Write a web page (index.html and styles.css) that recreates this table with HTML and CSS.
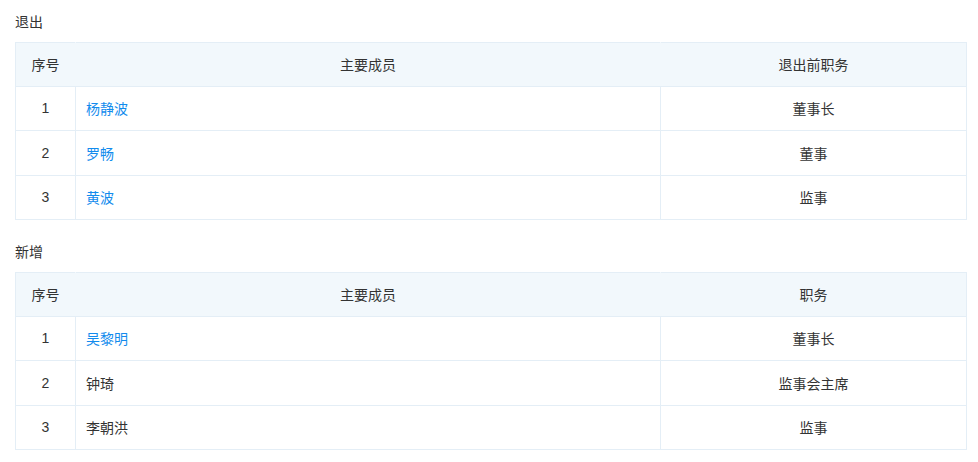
FILE: index.html
```html
<!DOCTYPE html>
<html lang="zh">
<head>
<meta charset="utf-8">
<link rel="stylesheet" href="styles.css">
</head>
<body>
<div class="page">
  <div class="section-title">退出</div>
  <table class="grid">
    <colgroup><col class="c1"><col class="c2"><col class="c3"></colgroup>
    <thead>
      <tr><th>序号</th><th>主要成员</th><th>退出前职务</th></tr>
    </thead>
    <tbody>
      <tr><td class="num">1</td><td class="name"><a class="link">杨静波</a></td><td class="pos">董事长</td></tr>
      <tr><td class="num">2</td><td class="name"><a class="link">罗畅</a></td><td class="pos">董事</td></tr>
      <tr><td class="num">3</td><td class="name"><a class="link">黄波</a></td><td class="pos">监事</td></tr>
    </tbody>
  </table>
  <div class="section-title second">新增</div>
  <table class="grid">
    <colgroup><col class="c1"><col class="c2"><col class="c3"></colgroup>
    <thead>
      <tr><th>序号</th><th>主要成员</th><th>职务</th></tr>
    </thead>
    <tbody>
      <tr><td class="num">1</td><td class="name"><a class="link">吴黎明</a></td><td class="pos">董事长</td></tr>
      <tr><td class="num">2</td><td class="name">钟琦</td><td class="pos">监事会主席</td></tr>
      <tr><td class="num">3</td><td class="name">李朝洪</td><td class="pos">监事</td></tr>
    </tbody>
  </table>
</div>
</body>
</html>
```
FILE: styles.css
```css
html, body {
  margin: 0;
  padding: 0;
  background: #fff;
}
body {
  font-family: "Noto Sans CJK SC", "Noto Sans", sans-serif;
  font-size: 14px;
  color: #333;
}
.page {
  padding: 0 12px 0 15px;
}
.section-title {
  height: 42px;
  line-height: 42px;
  font-size: 14px;
  color: #333;
}
.section-title.second {
  margin-top: 10px;
}
.grid {
  width: 951px;
  border-collapse: collapse;
  table-layout: fixed;
}
.c1 { width: 60px; }
.c2 { width: 585px; }
.c3 { width: 306px; }
.grid th, .grid td {
  border: 1px solid #e4eef6;
  padding: 0 10px;
  box-sizing: border-box;
  font-weight: normal;
  line-height: 20px;
}
.grid th {
  height: 43.5px;
  background: #f2f8fc;
  text-align: center;
  border-left-color: #f2f8fc;
  border-right-color: #f2f8fc;
}
.grid td { height: 44.5px; }
.grid th:first-child { border-left-color: #e4eef6; }
.grid th:last-child { border-right-color: #e4eef6; }
.grid td.num { text-align: center; font-family: "Liberation Sans", "Noto Sans CJK SC", sans-serif; }
.grid td.name { text-align: left; }
.grid td.pos { text-align: center; }
.link { color: #128bed; text-decoration: none; }
```
